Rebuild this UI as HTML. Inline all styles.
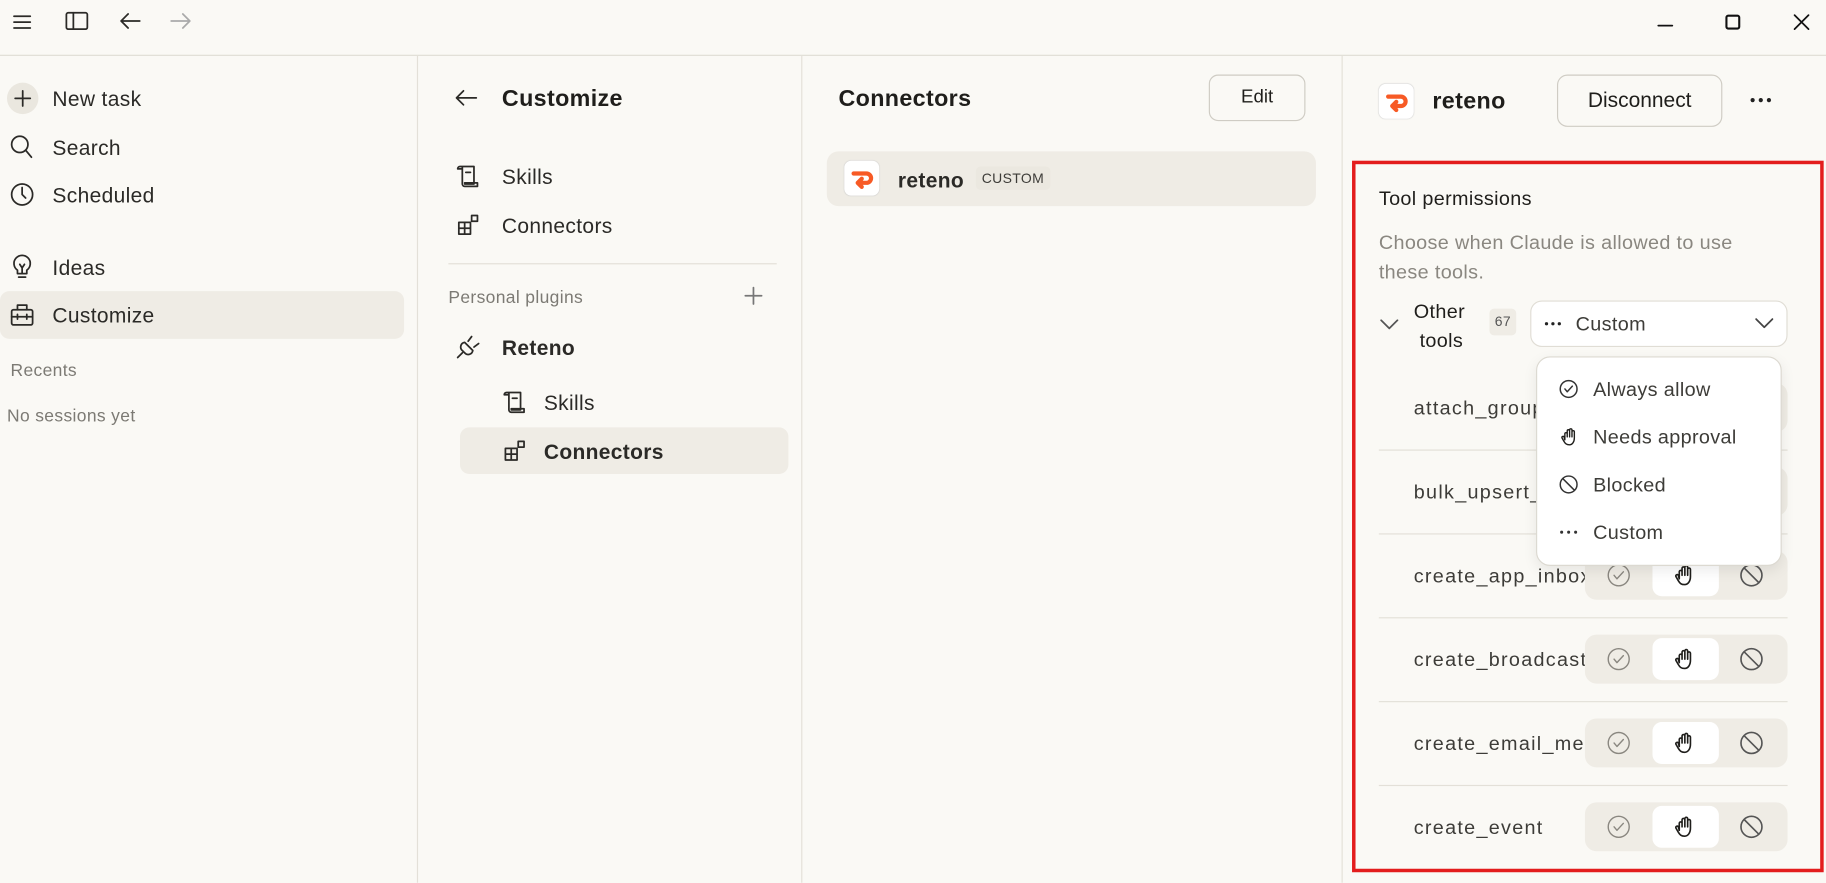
<!DOCTYPE html>
<html><head><meta charset="utf-8"><style>
*{box-sizing:border-box;margin:0;padding:0}
html,body{width:1826px;height:883px;overflow:hidden;background:#faf9f5}
#w{position:absolute;left:0;top:0;width:1568px;height:758px;transform:scale(1.16454);transform-origin:0 0;font-family:"Liberation Sans",sans-serif;color:#1f1e1b;background:#faf9f5}
.a{position:absolute;white-space:nowrap;transform:translateY(2px);letter-spacing:0.3px}
.t{font-size:18px;color:#2b2a27}
.b{font-weight:bold}
.g{color:#7c7a74}
svg.i{position:absolute;fill:none;stroke:#2b2a27;stroke-width:1.5;stroke-linecap:round;stroke-linejoin:round}
.sep{position:absolute;height:1px;background:#e3e0d8}
.seg{position:absolute;left:1361px;width:174px;height:42px;background:#efece5;border-radius:10px}
.seg .m{position:absolute;left:58px;top:3px;width:57px;height:36px;background:#fff;border-radius:8px}
.tool{position:absolute;left:1214px;font-size:17px;color:#3d3c38;width:147px;overflow:hidden;white-space:nowrap;letter-spacing:1.1px;transform:translateY(1px)}
</style></head><body><div id="w">
<div class="sep" style="left:0;top:47px;width:1568px;background:#e0ddd5"></div>
<svg class="i" style="left:10px;top:10px" width="18" height="18" viewBox="0 0 18 18"><path d="M2 4h14M2 9h14M2 14h14"/></svg>
<svg class="i" style="left:55px;top:8px" width="22" height="20" viewBox="0 0 22 20"><rect x="2" y="3" width="18" height="14" rx="1.5"/><path d="M8 3v14"/></svg>
<svg class="i" style="left:101px;top:8px" width="22" height="20" viewBox="0 0 22 20"><path d="M19 10H3M9 4L3 10l6 6"/></svg>
<svg class="i" style="left:144px;top:8px;stroke:#aaa" width="22" height="20" viewBox="0 0 22 20"><path d="M3 10h16M13 4l6 6-6 6"/></svg>
<svg class="i" style="left:1422px;top:11px;stroke:#111" width="16" height="16" viewBox="0 0 16 16"><path d="M2 11h12"/></svg>
<svg class="i" style="left:1480px;top:11px;stroke:#111;stroke-width:1.8" width="16" height="16" viewBox="0 0 16 16"><rect x="2.5" y="2.5" width="11" height="11" rx="1.5"/></svg>
<svg class="i" style="left:1539px;top:11px;stroke:#111" width="16" height="16" viewBox="0 0 16 16"><path d="M2 2l12 12M14 2L2 14"/></svg>
<div style="position:absolute;left:358px;top:48px;width:1px;height:710px;background:#e3e0d8"></div>
<div style="position:absolute;left:688px;top:48px;width:1px;height:710px;background:#e3e0d8"></div>
<div style="position:absolute;left:1152px;top:48px;width:1px;height:710px;background:#e3e0d8"></div>
<div style="position:absolute;left:6px;top:71px;width:27px;height:27px;border-radius:50%;background:#eae7df"></div>
<svg class="i" style="left:10px;top:75px" width="19" height="19" viewBox="0 0 19 19"><path d="M9.5 3v13M3 9.5h13"/></svg>
<div class="a t" style="left:45px;top:73px">New task</div>
<svg class="i" style="left:8px;top:115px" width="22" height="22" viewBox="0 0 22 22"><circle cx="9" cy="9" r="7"/><path d="M14 14l5 6"/></svg>
<div class="a t" style="left:45px;top:115px">Search</div>
<svg class="i" style="left:8px;top:156px" width="22" height="22" viewBox="0 0 22 22"><circle cx="11" cy="11" r="9"/><path d="M11 5v6l3 3"/></svg>
<div class="a t" style="left:45px;top:156px">Scheduled</div>
<svg class="i" style="left:9px;top:218px" width="20" height="22" viewBox="0 0 20 22"><path d="M6 14a7 7 0 1 1 8 0v3H6zM7 20h6M8 9l2 3 2-3M10 12v5"/></svg>
<div class="a t" style="left:45px;top:218px">Ideas</div>
<div style="position:absolute;left:0;top:250px;width:347px;height:41px;background:#efece5;border-radius:8px"></div>
<svg class="i" style="left:8px;top:259px" width="22" height="22" viewBox="0 0 22 22"><rect x="2" y="7" width="18" height="13" rx="1.5"/><path d="M7 7V3h8v4M2 13h18M7 11v4M15 11v4"/></svg>
<div class="a t" style="left:45px;top:259px">Customize</div>
<div class="a g" style="left:9px;top:308px;font-size:15px">Recents</div>
<div class="a g" style="left:6px;top:347px;font-size:15px">No sessions yet</div>
<svg class="i" style="left:389px;top:74px" width="22" height="20" viewBox="0 0 22 20"><path d="M20 10H3M9 4L3 10l6 6"/></svg>
<div class="a b" style="left:431px;top:72px;font-size:20px">Customize</div>
<svg class="i" style="left:391px;top:140px" width="22" height="22" viewBox="0 0 22 22"><path d="M4 3h12v15H8M4 3a2 2 0 0 0-2 2h4M6 3v15a2 2 0 0 0 2 2h11v-3H8M9 8h4"/></svg>
<div class="a t" style="left:431px;top:140px">Skills</div>
<svg class="i" style="left:391px;top:182px" width="22" height="22" viewBox="0 0 22 22"><path d="M3 9h10v10H3zM8 9v10M3 14h10M14 3h5v5h-5z"/></svg>
<div class="a t" style="left:431px;top:182px">Connectors</div>
<div class="sep" style="left:385px;top:226px;width:282px"></div>
<div class="a g" style="left:385px;top:245px;font-size:15px">Personal plugins</div>
<svg class="i" style="left:638px;top:245px;stroke:#777" width="18" height="18" viewBox="0 0 18 18"><path d="M9 2v14M2 9h14"/></svg>
<svg class="i" style="left:391px;top:287px" width="22" height="22" viewBox="0 0 22 22"><path d="M8 7l7 7a4 4 0 0 1-7 2l-2-2a4 4 0 0 1 2-7zM11 6l3-4M16 11l4-3M6 16l-4 4"/></svg>
<div class="a t b" style="left:431px;top:287px">Reteno</div>
<svg class="i" style="left:431px;top:334px" width="22" height="22" viewBox="0 0 22 22"><path d="M4 3h12v15H8M4 3a2 2 0 0 0-2 2h4M6 3v15a2 2 0 0 0 2 2h11v-3H8M9 8h4"/></svg>
<div class="a t" style="left:467px;top:334px">Skills</div>
<div style="position:absolute;left:395px;top:367px;width:282px;height:40px;background:#efece5;border-radius:8px"></div>
<svg class="i" style="left:431px;top:376px" width="22" height="22" viewBox="0 0 22 22"><path d="M3 9h10v10H3zM8 9v10M3 14h10M14 3h5v5h-5z"/></svg>
<div class="a t b" style="left:467px;top:376px">Connectors</div>
<div class="a b" style="left:720px;top:72px;font-size:20px">Connectors</div>
<div style="position:absolute;left:1038px;top:64px;width:83px;height:40px;border:1px solid #cfccc4;border-radius:8px;font-size:16px;text-align:center;line-height:38px">Edit</div>
<div style="position:absolute;left:710px;top:130px;width:420px;height:47px;background:#efece5;border-radius:10px"></div>
<div style="position:absolute;left:725px;top:138px;width:30px;height:30px;background:#fff;border-radius:6px;box-shadow:0 0 1px #ccc"><svg width="30" height="30" viewBox="0 0 30 30" style="position:absolute;left:0;top:0"><path d="M8 11h11a4 4 0 0 1 0 8h-7M15 15.5l-3.5 3.5 3.5 3.5" fill="none" stroke="#f75a25" stroke-width="3.6" stroke-linecap="round" stroke-linejoin="round"/></svg></div>
<div class="a t b" style="left:771px;top:143px">reteno</div>
<div class="a" style="left:838px;top:141px;padding:3px 5px;background:#ebe8e0;border-radius:4px;font-size:12px;color:#3d3c38">CUSTOM</div>
<div style="position:absolute;left:1184px;top:72px;width:30px;height:30px;background:#fff;border-radius:6px;box-shadow:0 0 1px #ccc"><svg width="30" height="30" viewBox="0 0 30 30" style="position:absolute;left:0;top:0"><path d="M8 11h11a4 4 0 0 1 0 8h-7M15 15.5l-3.5 3.5 3.5 3.5" fill="none" stroke="#f75a25" stroke-width="3.6" stroke-linecap="round" stroke-linejoin="round"/></svg></div>
<div class="a b" style="left:1230px;top:74px;font-size:20px">reteno</div>
<div style="position:absolute;left:1337px;top:64px;width:142px;height:45px;border:1px solid #cfccc4;border-radius:9px;font-size:18px;text-align:center;line-height:43px">Disconnect</div>
<svg style="position:absolute;left:1500px;top:80px" width="26" height="12"><g fill="#222"><circle cx="5" cy="6" r="1.8"/><circle cx="12" cy="6" r="1.8"/><circle cx="19" cy="6" r="1.8"/></g></svg>
<div style="position:absolute;left:1161px;top:138px;width:405px;height:611px;border:3px solid #e31d1d"></div>
<div class="a" style="left:1184px;top:159px;font-size:17px;color:#1f1e1b">Tool permissions</div>
<div class="a" style="left:1184px;top:194px;font-size:17px;color:#8a8780;line-height:25px;white-space:normal;width:330px">Choose when Claude is allowed to use these tools.</div>
<svg class="i" style="left:1184px;top:270px;stroke:#555" width="18" height="16" viewBox="0 0 18 16"><path d="M2 5l7 7 7-7"/></svg>
<div class="a" style="left:1214px;top:256px;font-size:17px">Other</div>
<div class="a" style="left:1219px;top:281px;font-size:17px">tools</div>
<div class="a" style="left:1279px;top:263px;width:23px;height:23px;background:#efece5;border-radius:4px;font-size:12px;text-align:center;line-height:23px;color:#555">67</div>
<div style="position:absolute;left:1314px;top:258px;width:221px;height:40px;background:#fff;border:1px solid #e0ddd5;border-radius:10px"></div>
<svg style="position:absolute;left:1324px;top:272px" width="20" height="12"><g fill="#222"><circle cx="4" cy="6" r="1.4"/><circle cx="9.5" cy="6" r="1.4"/><circle cx="15" cy="6" r="1.4"/></g></svg>
<div class="a" style="left:1353px;top:267px;font-size:17px;color:#3d3c38">Custom</div>
<svg class="i" style="left:1506px;top:270px;stroke:#444" width="18" height="16" viewBox="0 0 18 16"><path d="M2 4l7 7 7-7"/></svg>
<div class="tool" style="top:340px">attach_group_to_x</div>
<div class="sep" style="left:1184px;top:386px;width:351px"></div>
<div class="tool" style="top:412px">bulk_upsert_contacts</div>
<div class="sep" style="left:1184px;top:458px;width:351px"></div>
<div class="tool" style="top:484px">create_app_inbox</div>
<div class="sep" style="left:1184px;top:530px;width:351px"></div>
<div class="tool" style="top:556px">create_broadcast</div>
<div class="sep" style="left:1184px;top:602px;width:351px"></div>
<div class="tool" style="top:628px">create_email_message</div>
<div class="sep" style="left:1184px;top:674px;width:351px"></div>
<div class="tool" style="top:700px">create_event</div>
<div class="seg" style="top:329px"></div>
<div class="seg" style="top:401px"></div>
<div class="seg" style="top:473px"><div class="m"></div></div>
<div class="seg" style="top:545px"><div class="m"></div></div>
<div class="seg" style="top:617px"><div class="m"></div></div>
<div class="seg" style="top:689px"><div class="m"></div></div>
<svg style="position:absolute;left:0;top:0" width="1568" height="758" fill="none" stroke-linecap="round" stroke-linejoin="round">
<defs>
<g id="ck"><circle r="9" stroke="#8a8780" stroke-width="1.2"/><path d="M-4 0l2.5 3L4-3" stroke="#8a8780" stroke-width="1.2"/></g>
<g id="hd"><path d="M-5 2v-6a1.2 1.2 0 0 1 2.4 0v3M-2.6-1v-6a1.2 1.2 0 0 1 2.4 0v6M-0.2-1v-7a1.2 1.2 0 0 1 2.4 0v7M2.2-1v-5a1.2 1.2 0 0 1 2.4 0v6c0 4-2 7-5 7s-4-1-5.5-3.5l-2-3.5a1.2 1.2 0 0 1 2-1.2L-5 2" stroke="#1f1e1b" stroke-width="1.4"/></g>
<g id="bl"><circle r="9" stroke="#555" stroke-width="1.4"/><path d="M-6.3-6.3l12.6 12.6" stroke="#555" stroke-width="1.4"/></g>
</defs>
<use href="#ck" x="1390" y="494"/><use href="#hd" x="1447" y="495"/><use href="#bl" x="1504" y="494"/>
<use href="#ck" x="1390" y="566"/><use href="#hd" x="1447" y="567"/><use href="#bl" x="1504" y="566"/>
<use href="#ck" x="1390" y="638"/><use href="#hd" x="1447" y="639"/><use href="#bl" x="1504" y="638"/>
<use href="#ck" x="1390" y="710"/><use href="#hd" x="1447" y="711"/><use href="#bl" x="1504" y="710"/>
</svg>
<div style="position:absolute;left:1319px;top:306px;width:211px;height:180px;background:#fff;border:1px solid #dcd9d1;border-radius:12px;box-shadow:0 4px 12px rgba(0,0,0,.08)"></div>
<svg style="position:absolute;left:0;top:0" width="1568" height="758" fill="none" stroke-linecap="round" stroke-linejoin="round">
<g transform="translate(1347 334) scale(.8)"><circle r="9" stroke="#333" stroke-width="1.6"/><path d="M-4 0l2.5 3L4-3" stroke="#333" stroke-width="1.6"/></g>
<g transform="translate(1348 376) scale(.85)"><use href="#hd"/></g>
<g transform="translate(1347 416) scale(.8)"><circle r="9" stroke="#333" stroke-width="1.6"/><path d="M-6.3-6.3l12.6 12.6" stroke="#333" stroke-width="1.6"/></g>
<g fill="#333" stroke="none"><circle cx="1341" cy="457" r="1.3"/><circle cx="1347" cy="457" r="1.3"/><circle cx="1353" cy="457" r="1.3"/></g>
</svg>
<div class="a" style="left:1368px;top:323px;font-size:17px;color:#3d3c38">Always allow</div>
<div class="a" style="left:1368px;top:364px;font-size:17px;color:#3d3c38">Needs approval</div>
<div class="a" style="left:1368px;top:405px;font-size:17px;color:#3d3c38">Blocked</div>
<div class="a" style="left:1368px;top:446px;font-size:17px;color:#3d3c38">Custom</div>
</div></body></html>
